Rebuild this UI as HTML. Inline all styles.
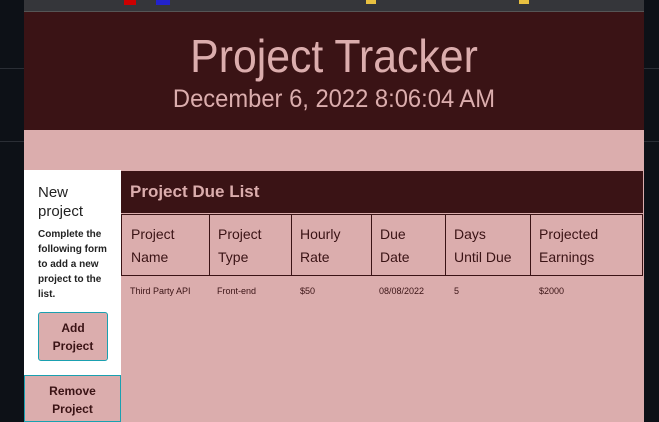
<!DOCTYPE html>
<html><head><style>
*{margin:0;padding:0;box-sizing:border-box}
body{width:659px;height:422px;background:#0d1117;position:relative;overflow:hidden;font-family:"Liberation Sans",sans-serif}
.abs{position:absolute}
.r span{white-space:nowrap}
</style></head><body>
<div class="abs" style="left:0;top:68px;width:24px;height:1px;background:#2a2e35"></div>
<div class="abs" style="left:0;top:141px;width:24px;height:1px;background:#2a2e35"></div>
<div class="abs" style="left:644px;top:68px;width:15px;height:1px;background:#2a2e35"></div>
<div class="abs" style="left:644px;top:141px;width:15px;height:1px;background:#2a2e35"></div>
<div class="abs" style="left:24px;top:0;width:620px;height:12px;background:#35363a;border-bottom:1px solid #555"></div>
<div class="abs" style="left:124px;top:0;width:12px;height:5px;background:#c00"></div>
<div class="abs" style="left:156px;top:0;width:14px;height:5px;background:#22c"></div>
<div class="abs" style="left:366px;top:0;width:10px;height:4px;background:#e8c040"></div>
<div class="abs" style="left:519px;top:0;width:10px;height:4px;background:#e8c040"></div>
<div class="abs" style="left:24px;top:12px;width:620px;height:118px;background:#3a1315;text-align:center;color:#dbadad">
<div style="font-size:46px;line-height:52px;margin-top:18px;transform:scaleX(0.93)">Project Tracker</div>
<div style="font-size:25px;line-height:30px;margin-top:2px;transform:scaleX(0.95)">December 6, 2022 8:06:04 AM</div>
</div>
<div class="abs" style="left:24px;top:130px;width:620px;height:40px;background:#dbadad"></div>
<div class="abs" style="left:24px;top:170px;width:97px;height:205px;background:#fff;padding:13px 6px 0 14px;color:#222">
<div style="font-size:15px;line-height:19px">New<br>project</div>
<div style="font-size:10px;font-weight:bold;line-height:15px;margin-top:6px;width:70px">Complete the following form to add a new project to the list.</div>
</div>
<div class="abs" style="left:38px;top:312px;width:70px;height:49px;background:#dbadad;border:1px solid #1aa0b0;border-radius:3px;text-align:center;font-weight:bold;font-size:12px;line-height:18px;padding-top:6px;color:#3a1315">Add<br>Project</div>
<div class="abs" style="left:24px;top:375px;width:97px;height:47px;background:#dbadad;border:1px solid #1aa0b0;text-align:center;font-weight:bold;font-size:12px;line-height:18px;padding-top:6px;color:#3a1315">Remove<br>Project</div>
<div class="abs" style="left:121px;top:170px;width:523px;height:252px;background:#dbadad"></div>
<div class="abs" style="left:121px;top:171px;width:522px;height:42px;background:#3a1315;color:#dbadad;font-weight:bold;font-size:17px;line-height:42px;padding-left:9px">Project Due List</div>
<div class="abs" style="left:121px;top:214px;width:522px;height:62px;border:1px solid #3a1315;display:flex;color:#3a1315;font-size:14px;line-height:23px">
<div style="width:88px;border-right:1px solid #3a1315;padding:8px 0 0 9px">Project<br>Name</div>
<div style="width:82px;border-right:1px solid #3a1315;padding:8px 0 0 8px">Project<br>Type</div>
<div style="width:80px;border-right:1px solid #3a1315;padding:8px 0 0 8px">Hourly<br>Rate</div>
<div style="width:74px;border-right:1px solid #3a1315;padding:8px 0 0 8px">Due<br>Date</div>
<div style="width:85px;border-right:1px solid #3a1315;padding:8px 0 0 8px">Days<br>Until Due</div>
<div style="flex:1;padding:8px 0 0 8px">Projected<br>Earnings</div>
</div>
<div class="abs r" style="top:285px;left:0;width:659px;font-size:9px;color:#3a1315;line-height:12px">
<span class="abs" style="left:130px">Third Party API</span>
<span class="abs" style="left:217px">Front-end</span>
<span class="abs" style="left:300px">$50</span>
<span class="abs" style="left:379px">08/08/2022</span>
<span class="abs" style="left:454px">5</span>
<span class="abs" style="left:539px">$2000</span>
</div>
</body></html>
